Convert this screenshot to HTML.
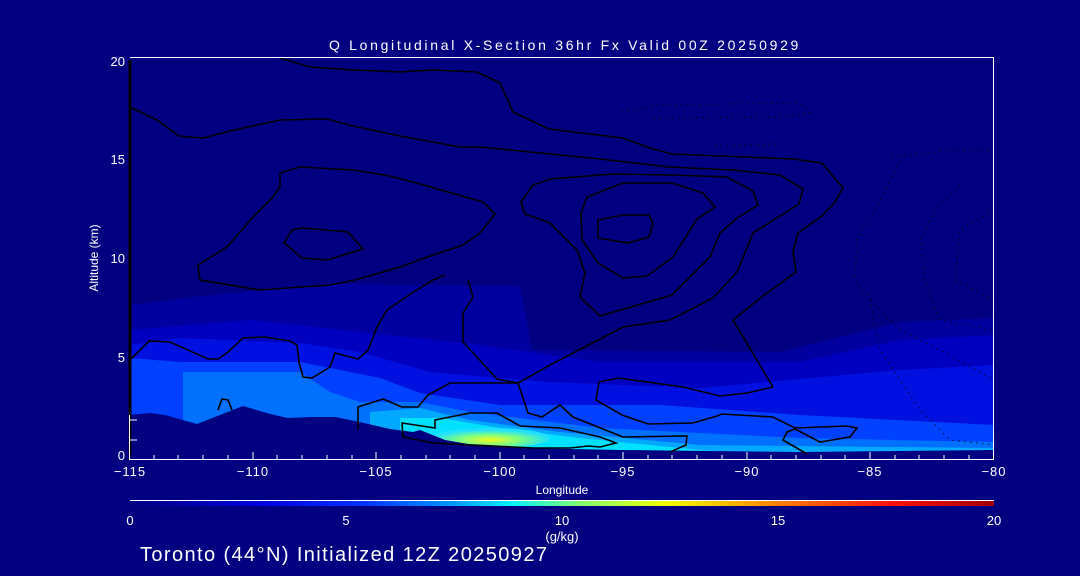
<!DOCTYPE html>
<html><head><meta charset="utf-8"><style>
html,body{margin:0;padding:0;background:#000080;width:1080px;height:576px;overflow:hidden}
svg{display:block}
text{font-family:"Liberation Sans",sans-serif;fill:#fff}
</style></head><body>
<svg width="1080" height="576" viewBox="0 0 1080 576" xmlns="http://www.w3.org/2000/svg">
<defs>
<linearGradient id="cb" x1="0" x2="1" y1="0" y2="0">
<stop offset="0" stop-color="#000080"/>
<stop offset="0.15" stop-color="#0000e0"/>
<stop offset="0.27" stop-color="#0030ff"/>
<stop offset="0.38" stop-color="#00a0ff"/>
<stop offset="0.44" stop-color="#00f0ff"/>
<stop offset="0.52" stop-color="#80ff70"/>
<stop offset="0.62" stop-color="#f0ff00"/>
<stop offset="0.75" stop-color="#ff8000"/>
<stop offset="0.88" stop-color="#ff1000"/>
<stop offset="1" stop-color="#a00000"/>
</linearGradient>
<radialGradient id="yb" cx="0.5" cy="0.6" r="0.5">
<stop offset="0" stop-color="#f0ff20"/>
<stop offset="0.5" stop-color="#80ff80"/>
<stop offset="1" stop-color="#20e0ff"/>
</radialGradient>
</defs>
<rect width="1080" height="576" fill="#000080"/>
<polygon fill="#0000a0" points="130,305 200,296 330,284 520,286 532,350 780,352 900,322 994,318 994,455 130,455"/>
<polygon fill="#0000c0" points="130,330 250,320 370,333 480,345 600,362 800,362 900,340 994,335 994,455 130,455"/>
<polygon fill="#0010e0" points="130,345 180,338 300,343 360,352 430,372 550,382 700,388 900,370 994,365 994,455 130,455"/>
<polygon fill="#0040ff" points="130,358 180,362 300,362 380,378 420,393 500,405 660,405 800,415 994,425 994,455 130,455"/>
<polygon fill="#0070ff" points="183,372 300,372 330,392 360,402 420,402 470,412 600,428 800,438 994,442 994,455 183,455"/>
<polygon fill="#00a8ff" points="370,412 420,408 470,420 560,432 700,445 994,448 994,455 370,455"/>
<polygon fill="#00e0ff" points="400,418 440,418 500,428 580,438 700,450 760,455 400,455"/>
<ellipse cx="490" cy="438" rx="60" ry="10" fill="url(#yb)"/>
<polygon fill="#000080" points="128,415 150,413 165,415 197,424 243,406 270,414 288,418 312,417 335,417 355,421 390,429 413,432 420,430 445,440 480,446 520,448 620,450 800,452 994,450 994,456 128,456"/>
<g fill="none" stroke="#000" stroke-width="1.6">
<polyline points="130,60 130,455" stroke-width="3"/>
<polyline points="280,58 310,67 353,70 400,72 433,70 477,72 500,83 513,112 549,129 623,138 650,148 672,154 793,159 822,163 843,188 835,202 822,216 798,233 793,252 796,272 763,296 733,320 773,387"/>
<polyline points="130,107 157,120 179,136 203,138 230,131 280,120 327,119 353,126 400,136 460,147 480,147 600,159 669,167 733,170 780,175 803,189 799,204 753,233 737,272 713,298 670,320 623,327 550,365 518,383 497,379 463,342 463,313 473,297 468,280"/>
<polygon points="280,173 300,167 353,170 390,176 413,182 483,202 495,214 480,233 463,245 427,257 400,267 355,280 330,285 260,290 200,280 198,265 227,247 253,217 273,197 280,187"/>
<polygon points="292,230 302,228 348,232 363,249 327,260 302,258 284,243"/>
<polygon points="533,185 550,179 613,174 673,175 727,177 753,191 758,205 737,218 720,233 710,257 672,295 600,316 580,297 585,273 577,250 550,223 525,214 521,202"/>
<polygon points="587,197 623,183 672,183 703,193 715,207 697,219 673,257 647,276 623,278 598,263 582,240 581,213"/>
<polygon points="598,220 623,215 649,215 653,223 649,237 628,243 598,238"/>
<polyline points="128,362 149,341 170,342 208,359 218,359 228,352 243,338 265,337 290,341 297,345 299,362 303,377 312,378 330,367 335,353 358,359 368,350 377,327 387,310 412,293 433,280 445,275"/>
<polyline points="518,383 450,383 428,395 418,407 402,407 383,399 358,407 358,430"/>
<polyline points="518,383 528,413 542,417 560,405 573,417 623,437 687,436 686,445 670,452"/>
<polygon points="402,423 435,428 435,420 470,413 497,413 520,426 560,428 600,437 616,443 600,447 588,446 570,448 533,448 433,443 403,437"/>
<polyline points="773,387 747,393 720,396 683,387 618,378 599,382 596,400 622,415 648,424 693,423 717,416 722,414 773,417 795,428 847,426 857,428 850,437 820,442 795,429 787,432 783,440 807,454"/>
<polyline points="218,410 222,399 228,400 232,410"/>
</g>
<g fill="none" stroke="#000" stroke-width="1.3" stroke-dasharray="1,5">
<polyline points="622,112 660,105 800,103 810,113 780,117 650,118"/>
<polyline points="715,146 780,144"/>
<polyline points="892,157 950,150 994,150"/>
<polyline points="900,160 880,200 857,240 855,280 880,310 900,330 940,350 994,380"/>
<polyline points="960,185 935,210 920,240 925,280 940,320 994,330"/>
<polyline points="994,210 960,230 955,280 994,300"/>
<polyline points="870,300 880,350 900,380 920,410 950,440 994,445"/>
</g>
<g stroke="#fff" stroke-width="1" fill="none">
<line x1="130" y1="57.5" x2="994" y2="57.5"/>
<line x1="993.5" y1="57" x2="993.5" y2="460"/>
<line x1="130" y1="459.5" x2="994" y2="459.5"/>
<line x1="129.5" y1="415" x2="129.5" y2="460"/>
<line x1="130" y1="420" x2="137" y2="420"/>
<line x1="130" y1="440" x2="137" y2="440"/>
<path d="M154 460v-5M178 460v-5M203 460v-5M228 460v-5M253 460v-8M277 460v-5M302 460v-5M327 460v-5M352 460v-5M376 460v-8M401 460v-5M426 460v-5M450 460v-5M475 460v-5M500 460v-8M524 460v-5M549 460v-5M574 460v-5M598 460v-5M623 460v-8M648 460v-5M672 460v-5M697 460v-5M722 460v-5M747 460v-8M771 460v-5M796 460v-5M821 460v-5M845 460v-5M870 460v-8M895 460v-5M919 460v-5M944 460v-5M969 460v-5"/>
</g>
<g font-size="13">
<text x="565" y="50" text-anchor="middle" font-size="14" letter-spacing="2.7">Q Longitudinal X-Section 36hr  Fx Valid 00Z 20250929</text>
<text x="125" y="66" text-anchor="end">20</text>
<text x="125" y="164" text-anchor="end">15</text>
<text x="125" y="263" text-anchor="end">10</text>
<text x="125" y="362" text-anchor="end">5</text>
<text x="125" y="460" text-anchor="end">0</text>
<text x="130" y="476" text-anchor="middle" letter-spacing="1">−115</text>
<text x="253" y="476" text-anchor="middle" letter-spacing="1">−110</text>
<text x="376" y="476" text-anchor="middle" letter-spacing="1">−105</text>
<text x="500" y="476" text-anchor="middle" letter-spacing="1">−100</text>
<text x="623" y="476" text-anchor="middle" letter-spacing="1">−95</text>
<text x="747" y="476" text-anchor="middle" letter-spacing="1">−90</text>
<text x="870" y="476" text-anchor="middle" letter-spacing="1">−85</text>
<text x="994" y="476" text-anchor="middle" letter-spacing="1">−80</text>
<text x="562" y="494" text-anchor="middle" font-size="12">Longitude</text>
<text transform="translate(98,258) rotate(-90)" text-anchor="middle" font-size="12">Altitude (km)</text>
<text x="130" y="525" text-anchor="middle">0</text>
<text x="346" y="525" text-anchor="middle">5</text>
<text x="562" y="525" text-anchor="middle">10</text>
<text x="778" y="525" text-anchor="middle">15</text>
<text x="994" y="525" text-anchor="middle">20</text>
<text x="562" y="541" text-anchor="middle">(g/kg)</text>
</g>
<line x1="130" y1="500.5" x2="994" y2="500.5" stroke="#fff"/>
<rect x="130" y="501" width="864" height="5" fill="url(#cb)"/>
<text x="140" y="561" font-size="20" letter-spacing="1.4">Toronto (44°N) Initialized 12Z 20250927</text>
</svg>
</body></html>
